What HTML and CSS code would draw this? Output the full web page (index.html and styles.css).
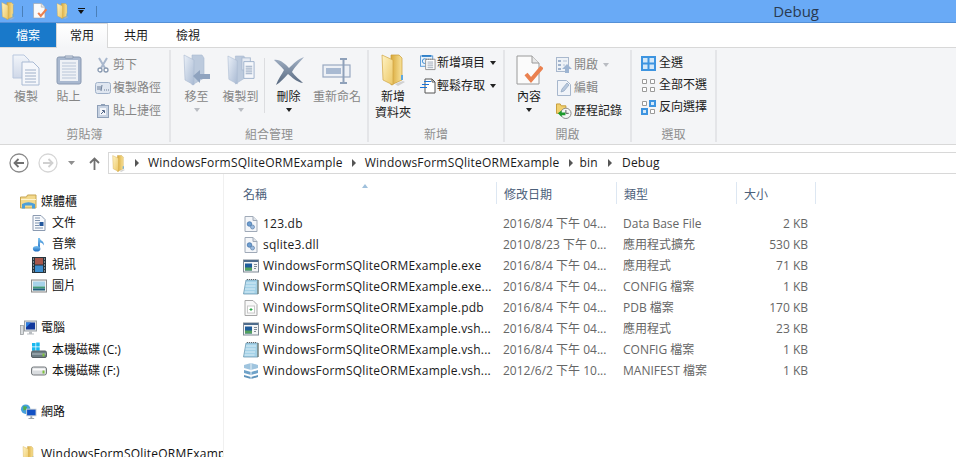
FILE: index.html
```html
<!DOCTYPE html>
<html lang="zh-Hant">
<head>
<meta charset="utf-8">
<title>Debug</title>
<link rel="stylesheet" href="styles.css">
</head>
<body>
<svg class="defs" xmlns="http://www.w3.org/2000/svg">
  <defs>
    <linearGradient id="gy" x1="0" y1="0" x2="1" y2="1"><stop offset="0" stop-color="#fff3c4"/><stop offset="1" stop-color="#ecc765"/></linearGradient>
    <linearGradient id="gy2" x1="0" y1="0" x2="1" y2="0"><stop offset="0" stop-color="#d9a93a"/><stop offset="1" stop-color="#f8e29a"/></linearGradient>
    <linearGradient id="gd" x1="0" y1="0" x2="0" y2="1"><stop offset="0" stop-color="#f2f5fa"/><stop offset="1" stop-color="#cfd8e8"/></linearGradient>
    <linearGradient id="gp" x1="0" y1="0" x2="1" y2="1"><stop offset="0" stop-color="#eaf0f8"/><stop offset="1" stop-color="#a9bad3"/></linearGradient>
    <linearGradient id="gx" x1="0" y1="0" x2="0" y2="1"><stop offset="0" stop-color="#a3b2c6"/><stop offset="1" stop-color="#56677e"/></linearGradient>
    <linearGradient id="gb" x1="0" y1="0" x2="0" y2="1"><stop offset="0" stop-color="#7cc4f2"/><stop offset="1" stop-color="#1b6cc2"/></linearGradient>
    <symbol id="folder" viewBox="0 0 24 32">
      <path d="M10 1h8l3 3v22l-11 5z" fill="url(#gy2)" stroke="#c99c35" stroke-width=".7"/>
      <path d="M1 1l11 5v25L2 26z" fill="url(#gy)" stroke="#d0a544" stroke-width=".7"/>
      <path d="M20 21h2v5h-2z" fill="#5fa8e0"/>
      <path d="M14 30l8-3 2 1-7 4z" fill="#b9b9b9" opacity=".6"/>
    </symbol>
    <symbol id="check" viewBox="0 0 27 31">
      <path d="M1 1h15l7 7v21H1z" fill="#fbfbfb" stroke="#9a9a9a"/>
      <path d="M16 1v7h7" fill="#e8e8e8" stroke="#9a9a9a"/>
      <path d="M10 19l5 6 11-13" fill="none" stroke="#ea8150" stroke-width="4"/>
    </symbol>
    <symbol id="copy" viewBox="0 0 28 32">
      <path d="M1 1h11l5 5v18H1z" fill="url(#gd)" stroke="#b9c7de"/>
      <path d="M10 8h11l6 6v17H10z" fill="#f5f7fb" stroke="#a9bad3"/>
      <path d="M13 16h11M13 19h11M13 22h11M13 25h11M13 28h11" stroke="#9fb0c9"/>
    </symbol>
    <symbol id="paste" viewBox="0 0 26 30">
      <rect x="1" y="2" width="24" height="27" rx="2" fill="#a9b8cf" stroke="#8a9ab2"/>
      <rect x="4" y="5" width="18" height="21" fill="#eef1f6"/>
      <path d="M6 8h14M6 11h14M6 14h14M6 17h14M6 20h14M6 23h14" stroke="#b8c5d8"/>
      <path d="M9 3h8V1h-8z" fill="#dfe5ee" stroke="#8a9ab2"/>
    </symbol>
    <symbol id="scissors" viewBox="0 0 12 16">
      <path d="M2 1l6 10M10 1L4 11" stroke="#a8b7cd" stroke-width="2" fill="none"/>
      <circle cx="3" cy="13" r="2" fill="#fff" stroke="#8798b0" stroke-width="1.3"/>
      <circle cx="9" cy="13" r="2" fill="#fff" stroke="#8798b0" stroke-width="1.3"/>
    </symbol>
    <symbol id="path" viewBox="0 0 16 12">
      <rect x=".5" y=".5" width="15" height="11" rx="2" fill="#dfe6f0" stroke="#9fb0c8"/>
      <path d="M3 4v4M5 4v4M7 3l-1 6M9 8h1M11 8h1M13 8h1" stroke="#6c7f99"/>
    </symbol>
    <symbol id="shortcut" viewBox="0 0 12 14">
      <rect x=".5" y="1.5" width="11" height="12" fill="#c7d2e2" stroke="#8fa0b8"/>
      <rect x="3" y="4" width="6" height="7" fill="#f4f6fa"/>
      <path d="M4 10l3-3M5 6.500h2.500V9" stroke="#54688a" fill="none"/>
      <rect x="4" y="0" width="4" height="2" fill="#8fa0b8"/>
    </symbol>
    <symbol id="moveto" viewBox="0 0 28 32">
      <path d="M9 1h10l2 3v20l-12 7z" fill="#bccadd" stroke="#a9b9d0" stroke-width=".6"/>
      <path d="M1 1l10 5v25L2 26z" fill="url(#gp)" stroke="#a9b9d0" stroke-width=".6"/>
      <path d="M10 22l7-6v4h10v5H17v4z" fill="#8fa3bf"/>
    </symbol>
    <symbol id="copyto" viewBox="0 0 30 32">
      <path d="M9 1h9l2 3v20L9 31z" fill="#bccadd" stroke="#a9b9d0" stroke-width=".6"/>
      <path d="M1 1l10 5v25L2 26z" fill="url(#gp)" stroke="#a9b9d0" stroke-width=".6"/>
      <rect x="16" y="3" width="9" height="13" fill="#e6ebf3" stroke="#a9b9d0"/>
      <path d="M18 7h11v18H18z" fill="#f5f7fb" stroke="#9db0ca"/>
      <path d="M20 12h7M20 14h7M20 16h7M20 18h7M20 20h7" stroke="#93a6c0"/>
    </symbol>
    <symbol id="xmark" viewBox="0 0 30 28">
      <path d="M0 3C6 2 11 7 15 11 19 7 24 2 30 0 25 6 20 11 18 15 21 19 26 23 29 26 22 25 18 20 14 17 10 21 6 26 2 28 4 22 8 17 10 13 7 9 3 6 0 3z" fill="url(#gx)"/>
    </symbol>
    <symbol id="rename" viewBox="0 0 30 26">
      <rect x="1" y="7" width="27" height="12" fill="#eef1f6" stroke="#98a9c1" stroke-width="1.2"/>
      <rect x="4" y="10" width="15" height="6" fill="#a9bad2"/>
      <path d="M18 1h7M18 25h7M21.500 1v24" stroke="#8fa1ba" stroke-width="2"/>
    </symbol>
    <symbol id="newitem" viewBox="0 0 17 16">
      <rect x=".5" y=".5" width="13" height="11" fill="#eaf3fb" stroke="#5a9ad6"/>
      <path d="M2 .5h10" stroke="#2f7fc8" stroke-width="2"/>
      <circle cx="5" cy="6" r="2.500" fill="none" stroke="#3a8ad0"/>
      <path d="M6 4h10v11H6z" fill="#fff" stroke="#8f8f8f"/>
      <path d="M8 7h6M8 9h6M8 11h6M8 13h6" stroke="#9aa6b5"/>
      <path d="M7 3.500v1M9 3.500v1M11 3.500v1M13 3.500v1" stroke="#777"/>
    </symbol>
    <symbol id="easy" viewBox="0 0 16 16">
      <path d="M5 1h7l3 3v11H5z" fill="#fff" stroke="#555"/>
      <path d="M12 1v3h3" fill="none" stroke="#555"/>
      <path d="M4 3.500h7M2 6.500h7M0 9.500h7" stroke="#1a74d8" stroke-width="1.200"/>
    </symbol>
    <symbol id="open" viewBox="0 0 16 16">
      <rect x=".5" y=".5" width="12" height="14" fill="#eef2f7" stroke="#a9b8cd"/>
      <path d="M2 3h3v2H2zM2 7h3v2H2zM2 11h3v2H2z" fill="#9fb2cc"/>
      <path d="M7 4h4M7 8h2" stroke="#b4c2d5"/>
      <path d="M11 7l5 5h-3v4h-4v-4H6z" fill="#9db4d2"/>
    </symbol>
    <symbol id="edit" viewBox="0 0 14 16">
      <path d="M.5.500h9l4 4v11H.5z" fill="#f1f4f9" stroke="#a7b7cd"/>
      <path d="M4 12l1-3 5-6 2 2-5 6z" fill="#b9c9de" stroke="#8ea3bf" stroke-width=".7"/>
    </symbol>
    <symbol id="history" viewBox="0 0 17 17">
      <path d="M.5 1h4l1 2h5v8H.5z" fill="#f1d06e" stroke="#c49a35"/>
      <circle cx="10.500" cy="11" r="5.500" fill="#f5f5f5" stroke="#888"/>
      <path d="M10.500 7.500V11h3" fill="none" stroke="#555"/>
      <path d="M2 11l4-3v2h4v3H6v2z" fill="#1d9a2c"/>
    </symbol>
    <symbol id="selall" viewBox="0 0 15 15">
      <rect width="15" height="15" fill="#3d94e0"/>
      <path d="M2 2h4.500v4.500H2zM8.500 2H13v4.500H8.500zM2 8.500h4.500V13H2zM8.500 8.500H13V13H8.500z" fill="#d4e8f8"/>
    </symbol>
    <symbol id="selnone" viewBox="0 0 15 15">
      <path d="M1.500 1.500h4v4h-4zM9.500 1.500h4v4h-4zM1.500 9.500h4v4h-4zM9.500 9.500h4v4h-4z" fill="#fff" stroke="#9a9a9a"/>
    </symbol>
    <symbol id="selinv" viewBox="0 0 15 15">
      <path d="M1.500 1.500h4v4h-4zM9.500 9.500h4v4h-4z" fill="#fff" stroke="#9a9a9a"/>
      <rect x="8" width="7" height="7" fill="#3d94e0"/><rect x="10" y="2" width="3" height="3" fill="#d4e8f8"/>
      <rect y="8" width="7" height="7" fill="#3d94e0"/><rect x="2" y="10" width="3" height="3" fill="#d4e8f8"/>
    </symbol>
    <symbol id="library" viewBox="0 0 17 15">
      <path d="M.5 2.500h6l1-2h8.500v13H.5z" fill="#f3d98c" stroke="#c7a551"/>
      <path d="M1 5h15" stroke="#fdf3cf"/>
      <path d="M2 14V9.500Q8.500 6 15 9.500V14h-3v-3H5v3z" fill="#4d9fd9"/>
    </symbol>
    <symbol id="docu" viewBox="0 0 13 16">
      <path d="M.5.500h8l4 4v11H.5z" fill="#f7f9fc" stroke="#8c9bb1"/>
      <path d="M2.500 3h5M2.500 5.500h5M2.500 8h4M2.500 10.500h4M2.500 13h8" stroke="#7f93ad"/>
      <rect x="7" y="7" width="4" height="4" fill="#22579c"/>
    </symbol>
    <symbol id="music" viewBox="0 0 14 17">
      <path d="M6 13V2h2c0 3 5 3 4 8-1-2-2-3-4-3v6z" fill="url(#gb)"/>
      <ellipse cx="4.500" cy="13.500" rx="4" ry="3" fill="url(#gb)"/>
    </symbol>
    <symbol id="video" viewBox="0 0 14 16">
      <rect width="14" height="16" fill="#27343c"/>
      <path d="M3 1h8v6.500H3z" fill="#a8574c"/>
      <path d="M3 8.500h8V15H3z" fill="#3e8fd0"/>
      <path d="M1 2h1M1 5h1M1 8h1M1 11h1M1 14h1M12 2h1M12 5h1M12 8h1M12 11h1M12 14h1" stroke="#d9e6ee"/>
    </symbol>
    <symbol id="picture" viewBox="0 0 16 13">
      <rect x=".5" y=".5" width="15" height="12" fill="#f2f2f2" stroke="#888"/>
      <rect x="2" y="2" width="12" height="5" fill="#a7d3ea"/>
      <rect x="2" y="7" width="12" height="2" fill="#3f9a78"/>
      <rect x="2" y="9" width="12" height="2" fill="#1d5e7e"/>
    </symbol>
    <symbol id="pc" viewBox="0 0 17 15">
      <rect x=".5" y="5" width="3" height="9" fill="#d9dcdf" stroke="#8f9396" stroke-width=".7"/>
      <rect x="4.500" y=".5" width="12" height="10" fill="#dfe3e7" stroke="#9aa0a5"/>
      <rect x="6" y="2" width="9" height="7" fill="#12389c"/>
      <path d="M6 2h5L6 7z" fill="#2d7fe0"/>
      <path d="M9 11h3v2h2v1H7v-1h2z" fill="#b9bdc1"/>
    </symbol>
    <symbol id="drivec" viewBox="0 0 16 16">
      <path d="M1 1h3.500v3.500H1zM5.200 .500h3.500v4H5.200zM1 5.200h3.500v3.500H1zM5.200 5.200h3.500v3.500H5.200z" fill="#17b8ef"/>
      <rect x=".5" y="9" width="15" height="6.500" rx="1.500" fill="#6d7d84" stroke="#555f64"/>
      <path d="M1 12h14" stroke="#b5c0c6"/>
      <rect x="11.500" y="11.500" width="2" height="3" fill="#7fc23c"/>
    </symbol>
    <symbol id="drivef" viewBox="0 0 16 9">
      <rect x=".5" y=".5" width="15" height="8" rx="2" fill="#d9dcdf" stroke="#74797d"/>
      <path d="M2 3h12" stroke="#fbfbfb" stroke-width="2"/>
      <rect x="11.500" y="4" width="2" height="3" fill="#7fc23c"/>
    </symbol>
    <symbol id="net" viewBox="0 0 17 17">
      <circle cx="5.500" cy="5.500" r="5" fill="#46a0dc"/>
      <path d="M3 2l4 1-1 3-3 1zM7 6l2 2-2 2z" fill="#4fae4a"/>
      <rect x="6" y="5" width="11" height="8" fill="#c8ced3"/>
      <rect x="7" y="6" width="9" height="6" fill="#1251c4"/>
      <path d="M10.500 13h2v2h2v1h-6v-1h2z" fill="#9aa2a8"/>
    </symbol>
    <symbol id="dll" viewBox="0 0 13 16">
      <path d="M.5.500h8l4 4v11H.5z" fill="#f4f6f9" stroke="#a0aab8"/>
      <path d="M8.500.500v4h4" fill="#dfe3e9" stroke="#a0aab8"/>
      <circle cx="5" cy="8" r="2.300" fill="#6f9fd0" stroke="#3a6ba5" stroke-width=".7"/>
      <circle cx="8" cy="11" r="2" fill="#9dbce0" stroke="#5b7fa8" stroke-width=".7"/>
    </symbol>
    <symbol id="exe" viewBox="0 0 16 13">
      <rect x=".5" y=".5" width="15" height="12" fill="#f4f5f6" stroke="#7f8a96"/>
      <path d="M1 1.500h14" stroke="#4f6c8c" stroke-width="2"/>
      <rect x="2" y="4" width="7" height="7" fill="#1e5c9a"/>
      <path d="M2 8h7v3H2z" fill="#53a05d"/>
      <path d="M11 5h3M11 7h3M11 9h2" stroke="#7f8a96"/>
    </symbol>
    <symbol id="config" viewBox="0 0 16 16">
      <path d="M3 1h12v14H.5z" fill="#a4d2e8" stroke="#6f9bb3" stroke-width=".8"/>
      <path d="M3 4h10M2.500 7h10M2 10h10M1.500 13h10" stroke="#d9edf6"/>
      <path d="M4 .5h10" stroke="#666" stroke-dasharray="1 1"/>
      <path d="M15 1v14" stroke="#6d6d5a"/>
    </symbol>
    <symbol id="pdb" viewBox="0 0 13 16">
      <path d="M.5.500h8l4 4v11H.5z" fill="#f8f8f8" stroke="#a8a8a8"/>
      <rect x="3" y="6" width="7" height="7" fill="#fff" stroke="#c8c8c8"/>
      <path d="M6.500 8v3M5 9.500h3" stroke="#2fa84a"/>
    </symbol>
    <symbol id="manifest" viewBox="0 0 16 16">
      <path d="M1 2l7-2 7 2v3l-7 2-7-2z" fill="#9fc4de"/>
      <path d="M1 7l7 2 7-2v3l-7 2-7-2z" fill="#6fa2c8"/>
      <path d="M1 12l7 2 7-2v2l-7 2-7-2z" fill="#5f93ba"/>
      <path d="M8 0v16" stroke="#e8f1f7"/>
    </symbol>
  </defs>
</svg>

<header class="titlebar">
  <svg class="i16 q1"><use href="#folder"/></svg>
  <span class="qsep"></span>
  <svg class="i16 q2"><use href="#check"/></svg>
  <svg class="i16 q3"><use href="#folder"/></svg>
  <span class="qcaret"></span>
  <span class="qsep q4"></span>
  <span class="wintitle">Debug</span>
</header>

<nav class="tabs">
  <span class="tab file">檔案</span>
  <span class="tab home">常用</span>
  <span class="tab share">共用</span>
  <span class="tab view">檢視</span>
</nav>

<section class="ribbon">
  <div class="group g1">
    <div class="cmds">
      <div class="big off w42"><svg class="ic-copy"><use href="#copy"/></svg><span>複製</span></div>
      <div class="big off w43"><svg class="ic-paste"><use href="#paste"/></svg><span>貼上</span></div>
      <div class="smalls off">
        <div class="small"><span class="slot"><svg class="sc"><use href="#scissors"/></svg></span><span>剪下</span></div>
        <div class="small"><span class="slot"><svg class="pa"><use href="#path"/></svg></span><span>複製路徑</span></div>
        <div class="small"><span class="slot"><svg class="sh"><use href="#shortcut"/></svg></span><span>貼上捷徑</span></div>
      </div>
    </div>
    <div class="glabel">剪貼簿</div>
  </div>
  <div class="group g2">
    <div class="cmds">
      <div class="big off w45"><svg class="ic-move"><use href="#moveto"/></svg><span>移至</span><i class="caret pale"></i></div>
      <div class="big off w43"><svg class="ic-move"><use href="#copyto"/></svg><span>複製到</span><i class="caret pale"></i></div>
      <span class="vsep"></span>
      <div class="big w45"><svg class="ic-x"><use href="#xmark"/></svg><span>刪除</span><i class="caret"></i></div>
      <div class="big off w52"><svg class="ic-x"><use href="#rename"/></svg><span>重新命名</span></div>
    </div>
    <div class="glabel">組合管理</div>
  </div>
  <div class="group g3">
    <div class="cmds">
      <div class="big w48 tight"><svg class="ic-folder"><use href="#folder"/></svg><span>新增<br>資料夾</span></div>
      <div class="smalls two">
        <div class="small"><span class="slot"><svg class="i16"><use href="#newitem"/></svg></span><span>新增項目</span><i class="caret sidecar"></i></div>
        <div class="small"><span class="slot"><svg class="i16"><use href="#easy"/></svg></span><span>輕鬆存取</span><i class="caret sidecar"></i></div>
      </div>
    </div>
    <div class="glabel">新增</div>
  </div>
  <div class="group g4">
    <div class="cmds">
      <div class="big w48 prop"><svg class="ic-check"><use href="#check"/></svg><span>內容</span><i class="caret"></i></div>
      <div class="smalls wide">
        <div class="small off"><span class="slot"><svg class="i16"><use href="#open"/></svg></span><span>開啟</span><i class="caret sidecar pale"></i></div>
        <div class="small off"><span class="slot"><svg class="i16"><use href="#edit"/></svg></span><span>編輯</span></div>
        <div class="small"><span class="slot"><svg class="i16"><use href="#history"/></svg></span><span>歷程記錄</span></div>
      </div>
    </div>
    <div class="glabel">開啟</div>
  </div>
  <div class="group g5">
    <div class="cmds">
      <div class="smalls sel">
        <div class="small"><span class="slot"><svg class="i15"><use href="#selall"/></svg></span><span>全選</span></div>
        <div class="small"><span class="slot"><svg class="i15"><use href="#selnone"/></svg></span><span>全部不選</span></div>
        <div class="small"><span class="slot"><svg class="i15"><use href="#selinv"/></svg></span><span>反向選擇</span></div>
      </div>
    </div>
    <div class="glabel">選取</div>
  </div>
</section>

<div class="addressrow">
  <div class="navbtns">
    <svg class="nav" viewBox="0 0 20 20"><circle cx="10" cy="10" r="9" fill="#fff" stroke="#8a8a8a" stroke-width="1.300"/><path d="M15 10H6M9.500 6L5.500 10l4 4" fill="none" stroke="#707070" stroke-width="1.800"/></svg>
    <svg class="nav" viewBox="0 0 20 20"><circle cx="10" cy="10" r="9" fill="#fff" stroke="#d6d6d6" stroke-width="1.300"/><path d="M5 10h9M10.500 6l4 4-4 4" fill="none" stroke="#d0d0d0" stroke-width="1.800"/></svg>
    <svg class="navcaret" viewBox="0 0 8 5"><path d="M0 0h7L3.500 4z" fill="#8f8f8f"/></svg>
    <svg class="navup" viewBox="0 0 11 13"><path d="M5.500 13V2M1 6l4.500-4.500L10 6" fill="none" stroke="#707070" stroke-width="1.800"/></svg>
  </div>
  <div class="address">
    <svg class="crumbfolder"><use href="#folder"/></svg>
    <i class="tri"></i><span>WindowsFormSQliteORMExample</span>
    <i class="tri"></i><span>WindowsFormSQliteORMExample</span>
    <i class="tri tobin"></i><span>bin</span>
    <i class="tri last"></i><span>Debug</span>
  </div>
</div>

<main class="content">
  <aside class="sidebar">
    <div class="tree top"><svg class="t17"><use href="#library"/></svg><span>媒體櫃</span></div>
    <div class="tree sub"><svg class="t16"><use href="#docu"/></svg><span>文件</span></div>
    <div class="tree sub"><svg class="t16"><use href="#music"/></svg><span>音樂</span></div>
    <div class="tree sub"><svg class="t16"><use href="#video"/></svg><span>視訊</span></div>
    <div class="tree sub"><svg class="t16"><use href="#picture"/></svg><span>圖片</span></div>
    <div class="tree top gap"><svg class="t17"><use href="#pc"/></svg><span>電腦</span></div>
    <div class="tree sub first"><svg class="t16"><use href="#drivec"/></svg><span>本機磁碟 (C:)</span></div>
    <div class="tree sub"><svg class="t16"><use href="#drivef"/></svg><span>本機磁碟 (F:)</span></div>
    <div class="tree top gap near"><svg class="t17"><use href="#net"/></svg><span>網路</span></div>
    <div class="tree top gap"><svg class="t17"><use href="#folder"/></svg><span class="clipname">WindowsFormSQliteORMExample</span></div>
  </aside>
  <section class="files">
    <div class="row head">
      <div class="namecell">名稱</div><div>修改日期</div><div>類型</div><div class="hsize">大小</div>
      <i class="sortmark"></i>
    </div>
    <div class="list">
      <div class="row"><div class="namecell"><svg class="fi"><use href="#dll"/></svg><span>123.db</span></div><div>2016/8/4 下午 04...</div><div>Data Base File</div><div class="size">2 KB</div></div>
      <div class="row"><div class="namecell"><svg class="fi"><use href="#dll"/></svg><span>sqlite3.dll</span></div><div>2010/8/23 下午 0...</div><div>應用程式擴充</div><div class="size">530 KB</div></div>
      <div class="row"><div class="namecell"><svg class="fi"><use href="#exe"/></svg><span>WindowsFormSQliteORMExample.exe</span></div><div>2016/8/4 下午 04...</div><div>應用程式</div><div class="size">71 KB</div></div>
      <div class="row"><div class="namecell"><svg class="fi"><use href="#config"/></svg><span>WindowsFormSQliteORMExample.exe...</span></div><div>2016/8/4 下午 04...</div><div>CONFIG 檔案</div><div class="size">1 KB</div></div>
      <div class="row"><div class="namecell"><svg class="fi"><use href="#pdb"/></svg><span>WindowsFormSQliteORMExample.pdb</span></div><div>2016/8/4 下午 04...</div><div>PDB 檔案</div><div class="size">170 KB</div></div>
      <div class="row"><div class="namecell"><svg class="fi"><use href="#exe"/></svg><span>WindowsFormSQliteORMExample.vsh...</span></div><div>2016/8/4 下午 04...</div><div>應用程式</div><div class="size">23 KB</div></div>
      <div class="row"><div class="namecell"><svg class="fi"><use href="#config"/></svg><span>WindowsFormSQliteORMExample.vsh...</span></div><div>2016/8/4 下午 04...</div><div>CONFIG 檔案</div><div class="size">1 KB</div></div>
      <div class="row"><div class="namecell"><svg class="fi"><use href="#manifest"/></svg><span>WindowsFormSQliteORMExample.vsh...</span></div><div>2012/6/2 下午 10...</div><div>MANIFEST 檔案</div><div class="size">1 KB</div></div>
    </div>
  </section>
</main>
</body>
</html>
```
FILE: styles.css
```css
* { box-sizing: border-box; }
html, body { margin: 0; padding: 0; }
body {
  width: 956px; height: 457px; overflow: hidden; background: #fff; color: #1a1a1a;
  font: 12px/16px "Open Sans", "Noto Sans CJK TC", sans-serif;
}
.defs { position: absolute; width: 0; height: 0; }
svg { display: block; flex: none; }
i { display: block; flex: none; }
.i16 { width: 16px; height: 16px; }
.i15 { width: 15px; height: 15px; }

.titlebar { height: 23px; background: #69aaf6; border-bottom: 1px solid #5590d6; display: flex; align-items: center; }
.q1 { width: 14px; height: 18px; margin-left: 1px; }
.qsep { width: 1px; height: 11px; background: #4a7fb8; margin-left: 7px; }
.q2 { width: 14px; height: 16px; margin-left: 10px; }
.q3 { width: 13px; height: 16px; margin-left: 9px; }
.qcaret { width: 7px; height: 6px; margin-left: 9px; border-top: 1px solid #111; position: relative; }
.qcaret::after { content: ""; position: absolute; left: 0; top: 1px; border: 3.5px solid transparent; border-top: 4px solid #111; border-bottom: 0; }
.q4 { margin-left: 11px; }
.wintitle { margin-left: auto; margin-right: 137px; font: 15px/20px "Open Sans", sans-serif; color: #2a3a50; }

.tabs { height: 24px; display: flex; align-items: stretch; position: relative; }
.tab { line-height: 25px; text-align: center; white-space: nowrap; }
.file { width: 56px; background: #1979ca; color: #fff; }
.home { width: 52px; border: 1px solid #d8d8d8; border-bottom: 0; background: linear-gradient(#fff, #f4f5f7); height: 25px; z-index: 1; line-height: 24px; }
.share { margin-left: 16px; width: 24px; }
.view { margin-left: 28px; width: 24px; }

.ribbon { height: 98px; background: #f4f5f7; border-top: 1px solid #d8d8d8; border-bottom: 1px solid #d8d8d8; display: flex; padding-top: 2px; }
.group { height: 92px; border-right: 2px solid #e4e5e8; display: flex; flex-direction: column; }
.g1 { width: 171px; }
.g2 { width: 198px; }
.g3 { width: 136px; }
.g4 { width: 127px; }
.g5 { width: 85px; }
.cmds { height: 72px; display: flex; flex: none; }
.glabel { text-align: center; color: #8f8f8f; line-height: 16px; margin-top: 5px; }
.g1 .cmds { padding-left: 5px; }
.g2 .cmds { padding-left: 3px; }
.big { display: flex; flex-direction: column; align-items: center; color: #1a1a1a; position: relative; text-align: center; padding-top: 1px; }
.big span { line-height: 16px; white-space: nowrap; }
.off { color: #868686; }
.w42 { width: 42px; } .w43 { width: 43px; } .w45 { width: 45px; } .w48 { width: 48px; } .w52 { width: 52px; }
.ic-copy { width: 28px; height: 32px; margin: 3px 0 3px; }
.ic-paste { width: 26px; height: 30px; margin: 4px 0 4px; }
.ic-move { width: 28px; height: 32px; margin: 3px 0 3px; }
.ic-x { width: 30px; height: 28px; margin: 6px 0 4px; }
.ic-folder { width: 24px; height: 32px; margin: 3px 0 3px; }
.ic-check { width: 27px; height: 31px; margin: 4px 0 3px; }
.tight span { line-height: 16px; }
.caret { width: 0; height: 0; border: 3.5px solid transparent; border-top: 4px solid #222; border-bottom: 0; margin: 3px auto 0; }
.caret.pale { border-top-color: #b9bcc2; }
.sidecar { margin: 0 0 0 5px; }
.vsep { width: 1px; height: 55px; background: #dcdde0; margin: 8px 1px 0 2px; }

.smalls { display: flex; flex-direction: column; padding-top: 3px; margin-left: 2px; }
.small { display: flex; align-items: center; height: 23.500px; white-space: nowrap; }
.slot { width: 21px; display: flex; justify-content: center; flex: none; }
.sc { width: 12px; height: 16px; }
.pa { width: 16px; height: 12px; }
.sh { width: 12px; height: 14px; }
.two { padding-top: 1px; margin-left: 1px; }
.two .slot { width: 19px; }
.wide { margin-left: 0; padding-top: 4px; }
.sel { margin-left: 6px; padding-top: 2px; }
.sel .small { height: 22px; }

.addressrow { height: 29px; padding-top: 7px; display: flex; }
.navbtns { width: 108px; display: flex; align-items: center; padding-left: 9px; height: 22px; }
.nav { width: 20px; height: 20px; margin-right: 9px; }
.navcaret { width: 8px; height: 5px; margin-left: 1px; }
.navup { width: 11px; height: 13px; margin-left: 13px; }
.address { flex: 1; height: 22px; border: 1px solid #d8d8d8; border-right: 0; display: flex; align-items: center; padding-left: 3px; }
.address span { letter-spacing: .22px; }
.crumbfolder { width: 13px; height: 17px; }
.tri { width: 0; height: 0; border: 4px solid transparent; border-left: 4px solid #555; border-right: 0; margin: 0 9px 0 9px; }
.crumbfolder + .tri { margin-left: 10px; margin-right: 9px; }
.tri.tobin { margin: 0 7px 0 9px; }
.tri.last { margin: 0 10px 0 10px; }

.content { display: flex; height: 284px; }
.sidebar { width: 224px; flex: none; border-right: 1px solid #f0f0f0; padding-top: 17px; overflow: hidden; }
.tree { display: flex; align-items: center; height: 21px; white-space: nowrap; color: #111; }
.top { padding-left: 20px; }
.top span { margin-left: 4px; }
.sub { padding-left: 31px; }
.sub span { margin-left: 5px; }
.gap { margin-top: 21px; }
.first { margin-top: 1px; }
.near { margin-top: 20px; }
.t17 { width: 17px; height: 16px; }
.t16 { width: 16px; height: 16px; }
.clipname { letter-spacing: .22px; }

.files { flex: 1; padding-top: 8px; position: relative; }
.row { display: grid; grid-template-columns: 272px 120px 120px 80px; height: 21px; align-items: center; color: #666; }
.row > div { padding-left: 7px; white-space: nowrap; }
.head { height: 22px; color: #4c607a; margin-bottom: 9px; }
.head > div { height: 22px; line-height: 26px; border-left: 1px solid #dde7f2; }
.head > .namecell { border-left: 0; padding-left: 19px; padding-top: 3px; }
.hsize { border-right: 1px solid #dde7f2; }
.sortmark { position: absolute; left: 138px; top: 10px; width: 0; height: 0; border: 3.5px solid transparent; border-bottom: 4px solid #9fc0dc; border-top: 0; }
.list .row { color: #666; }
.row .namecell { display: flex; align-items: center; padding-left: 19px; color: #1a1a1a; }
.list .namecell span { letter-spacing: .22px; }
.head .namecell { color: #4c607a; }
.fi { width: 16px; height: 16px; margin-right: 4px; }
.row .size { text-align: right; padding: 0 8px 0 0; }
```
